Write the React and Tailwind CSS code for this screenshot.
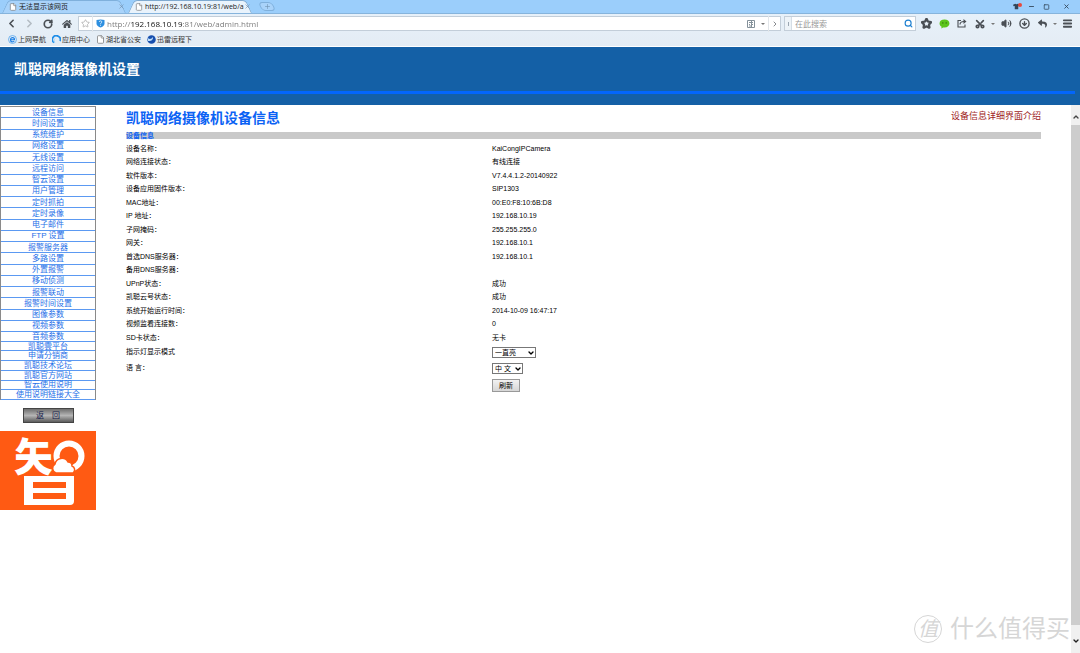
import React, { useState } from "react";
import {
  ChevronDown,
  ChevronLeft,
  ChevronRight,
  ChevronUp,
  CircleArrowDown,
  File,
  Menu,
  Minus,
  Plus,
  RotateCw,
  Scissors,
  Search,
  Square,
  Star,
  Volume2,
  X,
} from "lucide-react";
import { FaHome, FaReply, FaTshirt } from "react-icons/fa";

const menu = [
  "设备信息",
  "时间设置",
  "系统维护",
  "网络设置",
  "无线设置",
  "远程访问",
  "智云设置",
  "用户管理",
  "定时抓拍",
  "定时录像",
  "电子邮件",
  "FTP 设置",
  "报警服务器",
  "多路设置",
  "外置报警",
  "移动侦测",
  "报警联动",
  "报警时间设置",
  "图像参数",
  "视频参数",
];

const links = [
  "音频参数",
  "凯聪雲平台",
  "申请分销商",
  "凯聪技术论坛",
  "凯聪官方网站",
  "智云使用说明",
  "使用说明链接大全",
];

const info = [
  ["设备名称：", "KaiCongIPCamera"],
  ["网络连接状态：", "有线连接"],
  ["软件版本：", "V7.4.4.1.2-20140922"],
  ["设备应用固件版本：", "SIP1303"],
  ["MAC地址：", "00:E0:F8:10:6B:D8"],
  ["IP 地址：", "192.168.10.19"],
  ["子网掩码：", "255.255.255.0"],
  ["网关：", "192.168.10.1"],
  ["首选DNS服务器：", "192.168.10.1"],
  ["备用DNS服务器：", ""],
  ["UPnP状态：", "成功"],
  ["凯聪云号状态：", "成功"],
  ["系统开始运行时间：", "2014-10-09 16:47:17"],
  ["视频监看连接数：", "0"],
  ["SD卡状态：", "无卡"],
];

function IconButton({ label, className = "w-[18px]", children }) {
  return (
    <button
      aria-label={label}
      className={`flex h-4 shrink-0 items-center justify-center ${className}`}
    >
      {children}
    </button>
  );
}

function TabShape({ active }) {
  const color = active
    ? "bg-[#e9f3fc] border-[#7fa9cf]"
    : "bg-[#a9d3fa] border-[#7fb0dc]";
  return (
    <span className="absolute inset-0 -z-10 flex">
      <span
        className={`grow origin-bottom -skew-x-[25deg] rounded-tl-sm border-l border-t ${color}`}
      />
      <span
        className={`-ml-2 grow origin-bottom skew-x-[25deg] rounded-tr-sm border-r border-t ${color}`}
      />
    </span>
  );
}

function Tab({ title, active }) {
  return (
    <div className="relative z-0 flex h-[13px] w-[124px] items-center pl-[7px] pr-px">
      <TabShape active={active} />
      <File
        className="mr-[2px] size-2 shrink-0 fill-white text-[#777]"
        strokeWidth={2}
      />
      <span className="grow whitespace-nowrap text-[7px] leading-[10px] text-[#222]">
        {title}
      </span>
      <IconButton label="关闭标签页" className="w-[7px]">
        <X className="size-[7px] text-[#6f8aa5]" />
      </IconButton>
    </div>
  );
}

function TitleBar() {
  return (
    <div className="flex h-[14px] items-end border-b border-[#86b4dc] bg-[#9bcefb] pl-[2px]">
      <Tab title="无法显示该网页" />
      <div className="w-[2px]" />
      <Tab title="http://192.168.10.19:81/web/a" active />
      <button
        aria-label="新建标签页"
        className="relative z-0 ml-2 flex h-[11px] w-[14px] items-center justify-center"
      >
        <span className="absolute inset-x-0 top-0 -z-10 h-[9px] skew-x-[25deg] rounded-sm border border-[#7fb0dc] bg-[#a9d3fa]" />
        <Plus className="mb-[2px] size-[7px] text-[#6d8fae]" />
      </button>
      <div className="ml-auto flex h-[13px] items-center text-[#33475a]">
        <IconButton label="换肤" className="relative w-3">
          <FaTshirt className="size-[7px]" />
          <span className="absolute right-0 top-1 size-1 rounded-full bg-[#e8483c]" />
        </IconButton>
        <IconButton label="最小化">
          <Minus className="size-[7px]" strokeWidth={3} />
        </IconButton>
        <IconButton label="最大化" className="w-3">
          <Square className="h-[6px] w-[7px]" strokeWidth={3} />
        </IconButton>
        <IconButton label="关闭" className="mx-[3px] w-[22px]">
          <X className="size-[7px]" strokeWidth={3} />
        </IconButton>
      </div>
    </div>
  );
}

function Caret() {
  return (
    <svg viewBox="0 0 4 2" className="h-[2px] w-1 fill-[#777]">
      <path d="M0 0h4L2 2z" />
    </svg>
  );
}

function WeChat() {
  return (
    <svg viewBox="0 0 20 18" className="h-[10px] w-[11px]">
      <path
        d="M10 1C4.500 1 1 4 1 8.200c0 2.600 1.500 4.600 3.800 5.900L4 17l3.600-1.800c.8.100 1.600.2 2.400.2 5.400 0 9-3 9-7.200S15.400 1 10 1z"
        fill="#5cc41c"
      />
      <circle cx="7" cy="7" r="1.100" fill="#245c06" />
      <circle cx="13" cy="7" r="1.100" fill="#245c06" />
    </svg>
  );
}

function Share() {
  return (
    <svg
      viewBox="0 0 20 18"
      className="h-[9px] w-[10px]"
      fill="none"
      stroke="currentColor"
      strokeWidth="2.200"
    >
      <path d="M8 3H2v13h14v-5" />
      <path d="M6 11c0-4 3-6 8-6" />
      <path d="M13 0l6 5-6 5z" fill="currentColor" stroke="none" />
    </svg>
  );
}

function Shield() {
  return (
    <svg viewBox="0 0 18 18" className="size-[9px] shrink-0">
      <path d="M1 2l8-1 8 1v7c0 4-4 7-8 8-4-1-8-4-8-8z" fill="#2d8fe0" />
      <path
        d="M6.500 6c0-3 5.500-3 5 .2C11.200 8 9 8 9 10.500M9 12.500v1.500"
        fill="none"
        stroke="#fff"
        strokeWidth="1.600"
      />
    </svg>
  );
}

function Toolbar() {
  return (
    <div className="flex h-[19px] items-center text-[#4a4f55]">
      <div className="flex w-[78px] shrink-0 items-center pl-[2px]">
        <IconButton label="后退">
          <ChevronLeft className="size-[13px]" strokeWidth={3} />
        </IconButton>
        <IconButton label="前进">
          <ChevronRight className="size-[13px] text-[#b4bcc4]" strokeWidth={3} />
        </IconButton>
        <IconButton label="刷新页面" className="w-5">
          <RotateCw className="size-[10px]" strokeWidth={4} />
        </IconButton>
        <IconButton label="主页">
          <FaHome className="size-[10px]" />
        </IconButton>
      </div>
      <div className="flex h-[15px] grow items-center border border-[#c3ced9] bg-white">
        <IconButton label="收藏此页" className="w-[14px] border-r border-[#e2e6ea]">
          <Star className="size-[9px] text-[#aaa]" strokeWidth={2} />
        </IconButton>
        <span className="flex w-[14px] justify-center">
          <Shield />
        </span>
        <input
          aria-label="地址"
          defaultValue="http://192.168.10.19:81/web/admin.html"
          className="h-3 grow bg-[linear-gradient(90deg,#777_24px,#111_24px,#111_75px,#777_75px)] bg-clip-text text-[8px] leading-3 text-transparent outline-none"
        />
        <IconButton label="二维码" className="w-[14px]">
          <svg viewBox="0 0 8 8" className="size-2" fill="none" stroke="#84919a">
            <path d="M.5.5h7v7h-7zM2 2.500h2M5 2.500h1M2 4.500h1M4 4.500h2M2 6h3M4.500 1v6" />
          </svg>
        </IconButton>
        <IconButton label="更多地址" className="w-[10px]">
          <Caret />
        </IconButton>
        <IconButton label="转到" className="w-3 border-l border-[#e2e6ea]">
          <ChevronRight className="size-2" />
        </IconButton>
      </div>
      <div className="ml-[3px] flex h-[15px] w-[132px] shrink-0 items-center border border-[#c3ced9] bg-white">
        <span className="flex h-full w-[7px] items-center justify-center border-r border-[#d5dde5] bg-[#edf3f8]">
          <span className="h-1 w-px bg-[#9aa6b2]" />
        </span>
        <input
          aria-label="搜索"
          placeholder="在此搜索"
          className="h-3 w-0 grow pl-[3px] text-[8px] leading-3 outline-none placeholder:text-[#999]"
        />
        <IconButton label="搜索" className="w-[14px]">
          <Search className="size-[9px] text-[#1c7fd0]" strokeWidth={3} />
        </IconButton>
      </div>
      <div className="flex w-[164px] shrink-0 items-center pl-[1px]">
        <IconButton label="收藏">
          <Star className="size-[11px]" strokeWidth={5} />
        </IconButton>
        <IconButton label="微信">
          <WeChat />
        </IconButton>
        <IconButton label="分享">
          <Share />
        </IconButton>
        <IconButton label="截图">
          <Scissors className="size-[10px] -rotate-90" strokeWidth={4} />
        </IconButton>
        <IconButton label="截图选项" className="w-2">
          <Caret />
        </IconButton>
        <IconButton label="声音">
          <Volume2 className="size-[11px] fill-current" strokeWidth={2} />
        </IconButton>
        <IconButton label="下载">
          <CircleArrowDown className="size-[11px]" strokeWidth={3} />
        </IconButton>
        <IconButton label="撤销">
          <FaReply className="size-[9px]" />
        </IconButton>
        <IconButton label="撤销选项" className="w-2">
          <Caret />
        </IconButton>
        <IconButton label="菜单" className="w-4">
          <Menu className="size-[11px]" strokeWidth={4} />
        </IconButton>
      </div>
    </div>
  );
}

function Bookmarks() {
  const link = "flex items-center gap-px";
  return (
    <nav className="flex h-[13px] items-center gap-[6px] pl-2 text-[7px] leading-[10px] text-[#333]">
      <a href="#" className={link}>
        <svg viewBox="0 0 18 18" className="size-[9px]" fill="none">
          <circle cx="9" cy="9" r="8" stroke="#4ba0ee" strokeWidth="1.500" />
          <path
            d="M5 9.500h8c0-5.500-8-5.500-8 0s5.500 5 7.500 2.500"
            stroke="#1a7fe6"
            strokeWidth="2.400"
          />
        </svg>
        上网导航
      </a>
      <a href="#" className={link}>
        <svg viewBox="0 0 18 18" className="size-[9px]" fill="none">
          <path d="M4 15A8 7.500 0 1 1 16 12" stroke="#1f8ee8" strokeWidth="3.500" />
          <path d="M6 16a6 6 0 0 1 0-9" stroke="#9cd2f7" strokeWidth="2" />
        </svg>
        应用中心
      </a>
      <a href="#" className={link}>
        <File className="size-[9px] fill-white text-[#777]" strokeWidth={2} />
        湖北省公安
      </a>
      <a href="#" className={link}>
        <svg viewBox="0 0 18 18" className="size-[9px]">
          <circle cx="9" cy="9" r="8.500" fill="#174fae" />
          <path d="M1 5c2 4 8 4 11-1 1 5-4 9-10 8z" fill="#bfe0fb" />
        </svg>
        迅雷远程下
      </a>
    </nav>
  );
}

function Menus({ items, className }) {
  return (
    <ul className={`grid auto-rows-fr ${className}`}>
      {items.map((item) => (
        <li
          key={item}
          className="flex items-center justify-center border-b border-[#5b99f2]"
        >
          <a href="#" className="text-[8px] leading-[9px] text-[#1e6fe8]">
            {item}
          </a>
        </li>
      ))}
    </ul>
  );
}

function Logo() {
  return (
    <svg viewBox="0 0 96 79" className="w-full bg-[#ff5a13]" fill="#fff">
      <text
        x="14"
        y="40"
        fontSize="39"
        fontWeight="900"
        fontFamily="'Noto Sans CJK SC', sans-serif"
      >
        矢
      </text>
      <circle cx="69" cy="25" r="12.500" fill="#ff5a13" stroke="#fff" strokeWidth="6" />
      <path
        d="M56 42a5 5 0 0 1-1-9 7 7 0 0 1 13-2 4 4 0 0 1 4 4 4 4 0 0 1 1 7z"
        stroke="#ff5a13"
        strokeWidth="1.500"
      />
      <path d="M24 45h50v25q0 4-4 4H24z" />
      <path d="M33 51h33v6H33zM33 62h33v6H33z" fill="#ff5a13" />
    </svg>
  );
}

function Sidebar() {
  return (
    <aside className="w-24 shrink-0">
      <nav className="mt-px border-x border-t border-[#8a8a8a]">
        <Menus items={menu} className="h-[225px]" />
        <Menus items={links} className="h-[68px]" />
      </nav>
      <button className="mx-auto mt-2 block h-[15px] w-[51px] border border-[#444] bg-linear-to-b from-[#6f6f6f] via-[#b5b5b5] to-[#5c5c5c] text-[8px] leading-3 text-[#16204c]">
        返　回
      </button>
      <div className="mt-2">
        <Logo />
      </div>
    </aside>
  );
}

function Select({ id, options, className }) {
  const [value, setValue] = useState(options[0]);
  return (
    <div className={`relative h-[11px] ${className}`}>
      <select
        id={id}
        value={value}
        onChange={(e) => setValue(e.target.value)}
        className="block h-full w-full appearance-none border border-[#777] bg-white pl-[2px] text-[7px] leading-[9px]"
      >
        {options.map((o) => (
          <option key={o}>{o}</option>
        ))}
      </select>
      <ChevronDown
        className="pointer-events-none absolute right-px top-[2px] size-2"
        strokeWidth={4}
      />
    </div>
  );
}

function DeviceInfo() {
  return (
    <main className="grow px-[30px] text-black">
      <div className="flex items-start justify-between pt-1">
        <h2 className="text-sm leading-[18px] font-bold text-[#0b62f4]">
          凯聪网络摄像机设备信息
        </h2>
        <a href="#" className="text-[9px] leading-[14px] text-[#a01c1c]">
          设备信息详细界面介绍
        </a>
      </div>
      <h3 className="mt-[5px] bg-[#c9c9c9] text-[7px] leading-[7px] font-bold text-[#0b62f4]">
        设备信息
      </h3>
      <table className="mt-[3px] w-full table-fixed text-left text-[7px] leading-[10px]">
        <tbody>
          {info.map(([name, value]) => (
            <tr key={name} className="odd:h-[13px] even:h-[14px]">
              <th scope="row" className="w-2/5 p-0 font-normal">
                {name}
              </th>
              <td className="p-0">{value}</td>
            </tr>
          ))}
          <tr className="h-4">
            <th scope="row" className="p-0 font-normal">
              <label htmlFor="led">指示灯显示模式</label>
            </th>
            <td className="p-0">
              <Select id="led" options={["一直亮", "闪烁", "关闭"]} className="w-[44px]" />
            </td>
          </tr>
          <tr className="h-4">
            <th scope="row" className="p-0 font-normal">
              <label htmlFor="lang">语 言：</label>
            </th>
            <td className="p-0">
              <Select id="lang" options={["中 文", "English"]} className="w-[31px]" />
            </td>
          </tr>
          <tr className="h-[19px]">
            <td className="p-0" />
            <td className="p-0">
              <button className="block h-[13px] w-7 border border-[#999] bg-linear-to-b from-[#f2f2f2] to-[#d6d6d6] text-[7px] leading-[10px]">
                刷新
              </button>
            </td>
          </tr>
        </tbody>
      </table>
    </main>
  );
}

function ScrollBar() {
  return (
    <div className="flex w-[9px] shrink-0 flex-col items-center bg-[#f0f0f0] pt-2 pb-2">
      <ChevronUp className="size-2 text-[#444]" strokeWidth={4} />
      <span className="mt-1 mb-3 w-full grow bg-[#cdcdcd]" />
      <ChevronDown className="size-2 text-[#222]" strokeWidth={4} />
    </div>
  );
}

export default function App() {
  return (
    <div className="relative flex min-h-screen flex-col bg-white font-['Liberation_Sans','Noto_Sans_CJK_SC',sans-serif]">
      <div className="bg-linear-to-b from-[#e9f3fc] to-[#e4ecf4] font-['Open_Sans','Noto_Sans_CJK_SC',sans-serif]">
        <TitleBar />
        <Toolbar />
        <Bookmarks />
      </div>
      <header className="mt-px bg-[#1460a6]">
        <h1 className="py-3 pl-[14px] text-sm leading-5 font-bold text-white">
          凯聪网络摄像机设置
        </h1>
        <div className="mr-[5px] h-[3px] bg-[#0366fb]" />
        <div className="h-[11px]" />
      </header>
      <div className="flex grow">
        <Sidebar />
        <DeviceInfo />
        <ScrollBar />
      </div>
      <div className="pointer-events-none absolute right-[10px] bottom-2 flex items-center gap-2 text-[#d6d6d6]">
        <span className="flex size-7 items-center justify-center rounded-full border border-current text-xl leading-5 italic">
          值
        </span>
        <span className="text-2xl leading-8">什么值得买</span>
      </div>
    </div>
  );
}
